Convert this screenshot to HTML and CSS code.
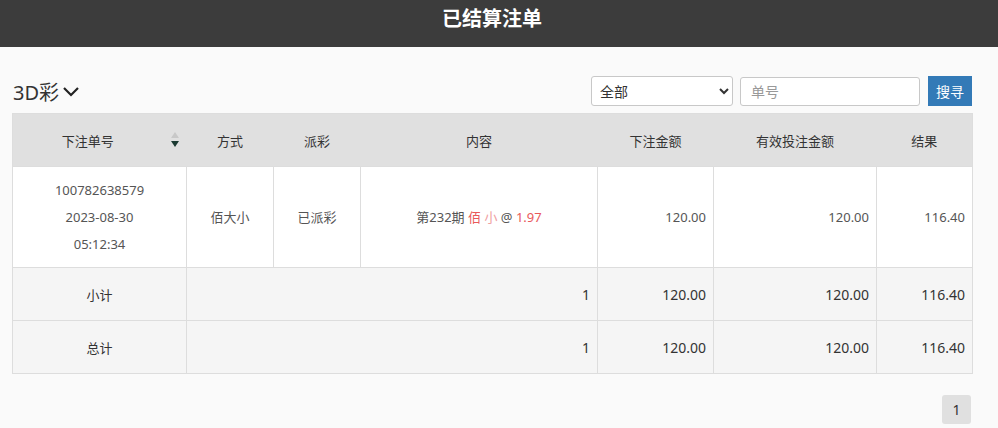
FILE: index.html
```html
<!DOCTYPE html>
<html lang="zh-CN">

<head>
    <meta charset="UTF-8">
    <meta name="viewport" content="width=device-width, initial-scale=1.0">
    <title>已结算注单</title>
    <link rel="stylesheet" href="styles.css">
</head>

<body>
    <header class="top-bar">已结算注单</header>

    <div class="wrap">
        <div class="toolbar">
            <div class="game-title">
                3D彩
                <svg class="chev" width="18" height="12" viewBox="0 0 18 12">
                    <polyline points="2,2 9,9 16,2" fill="none" stroke="#222" stroke-width="2.2" />
                </svg>
            </div>
            <div class="search">
                <select class="sel">
                    <option>全部</option>
                </select>
                <input class="num-input" type="text" placeholder="单号">
                <button class="btn-search">搜寻</button>
            </div>
        </div>

        <table class="bets">
            <colgroup>
                <col style="width:174px">
                <col style="width:87px">
                <col style="width:87px">
                <col style="width:237px">
                <col style="width:116px">
                <col style="width:163px">
                <col style="width:96px">
            </colgroup>
            <thead>
                <tr>
                    <th class="sortable">下注单号
                        <span class="sort">
                            <span class="up"></span>
                            <span class="down"></span>
                        </span>
                    </th>
                    <th>方式</th>
                    <th>派彩</th>
                    <th>内容</th>
                    <th>下注金额</th>
                    <th>有效投注金额</th>
                    <th>结果</th>
                </tr>
            </thead>
            <tbody>
                <tr class="bet-row">
                    <td class="c">100782638579<br>2023-08-30<br>05:12:34</td>
                    <td class="c">佰大小</td>
                    <td class="c">已派彩</td>
                    <td class="c">第232期 <span class="red">佰</span> <span class="pink">小</span> @ <span class="red">1.97</span></td>
                    <td class="r">120.00</td>
                    <td class="r">120.00</td>
                    <td class="r">116.40</td>
                </tr>
                <tr class="sum-row">
                    <td class="c">小计</td>
                    <td class="r" colspan="3">1</td>
                    <td class="r">120.00</td>
                    <td class="r">120.00</td>
                    <td class="r">116.40</td>
                </tr>
                <tr class="sum-row">
                    <td class="c">总计</td>
                    <td class="r" colspan="3">1</td>
                    <td class="r">120.00</td>
                    <td class="r">120.00</td>
                    <td class="r">116.40</td>
                </tr>
            </tbody>
        </table>

        <div class="pager">
            <span class="page">1</span>
        </div>
    </div>
</body>

</html>
```

FILE: styles.css
```css
body {
    margin: 0;
    background-color: #fafafa;
    font-family: "Noto Sans", "Noto Sans CJK SC", sans-serif;
    color: #333;
}

.top-bar {
    height: 47px;
    line-height: 38px;
    padding-right: 14px;
    background-color: #3c3c3c;
    color: #fff;
    text-align: center;
    font-size: 20px;
    font-weight: bold;
}

.wrap {
    width: 960px;
    margin-left: 12px;
}

.toolbar {
    display: flex;
    justify-content: space-between;
    align-items: center;
    margin-top: 29px;
    margin-bottom: 7px;
}

.game-title {
    display: flex;
    align-items: center;
    gap: 3px;
    font-size: 20px;
    color: #333;
    margin-left: 1px;
}

.chev {
    margin-top: 1px;
}

.search {
    display: flex;
    align-items: center;
}

.sel {
    width: 142px;
    height: 30px;
    border: 1px solid #c8c8c8;
    border-radius: 3px;
    background-color: #fff;
    font-family: inherit;
    font-size: 14px;
    color: #333;
    padding: 0 4px;
}

.num-input {
    width: 180px;
    height: 29px;
    box-sizing: border-box;
    margin-left: 7px;
    border: 1px solid #c8c8c8;
    border-radius: 3px;
    background-color: #fff;
    font-family: inherit;
    font-size: 14px;
    padding: 0 10px;
}

.num-input::placeholder {
    color: #999;
}

.btn-search {
    margin-left: 8px;
    width: 44px;
    height: 30px;
    border: none;
    background-color: #337ab7;
    color: #fff;
    font-family: inherit;
    font-size: 14px;
    padding: 0;
}

.bets {
    width: 960px;
    table-layout: fixed;
    border-collapse: collapse;
    border: 1px solid #ddd;
    font-size: 13px;
}

.bets th {
    height: 53px;
    box-sizing: border-box;
    background-color: #e0e0e0;
    font-weight: normal;
    color: #333;
    padding: 0;
}

.bets th.sortable {
    position: relative;
    padding-right: 24px;
}

.sort {
    position: absolute;
    right: 8px;
    top: 18px;
    display: flex;
    flex-direction: column;
    gap: 3px;
}

.sort .up {
    width: 0;
    height: 0;
    border-left: 4px solid transparent;
    border-right: 4px solid transparent;
    border-bottom: 6px solid #c8c8c8;
}

.sort .down {
    width: 0;
    height: 0;
    border-left: 4px solid transparent;
    border-right: 4px solid transparent;
    border-top: 6px solid #1b3a32;
}

.bets td {
    border: 1px solid #ddd;
    padding: 0 7px;
}

.bets .c {
    text-align: center;
}

.bets .r {
    text-align: right;
}

.bet-row td {
    height: 100px;
    background-color: #fff;
    color: #555;
    line-height: 27px;
}

.sum-row td {
    height: 52px;
    background-color: #f5f5f5;
    font-size: 14px;
    color: #333;
}

.sum-row td.c {
    font-size: 13px;
}

.red {
    color: #e9595b;
}

.pink {
    color: #f0a0a2;
}

.pager {
    display: flex;
    justify-content: flex-end;
    margin-top: 21px;
    padding-right: 1px;
}

.page {
    width: 29px;
    height: 29px;
    line-height: 29px;
    text-align: center;
    background-color: #e0e0e0;
    border-radius: 3px;
    font-size: 14px;
    color: #333;
}
```
